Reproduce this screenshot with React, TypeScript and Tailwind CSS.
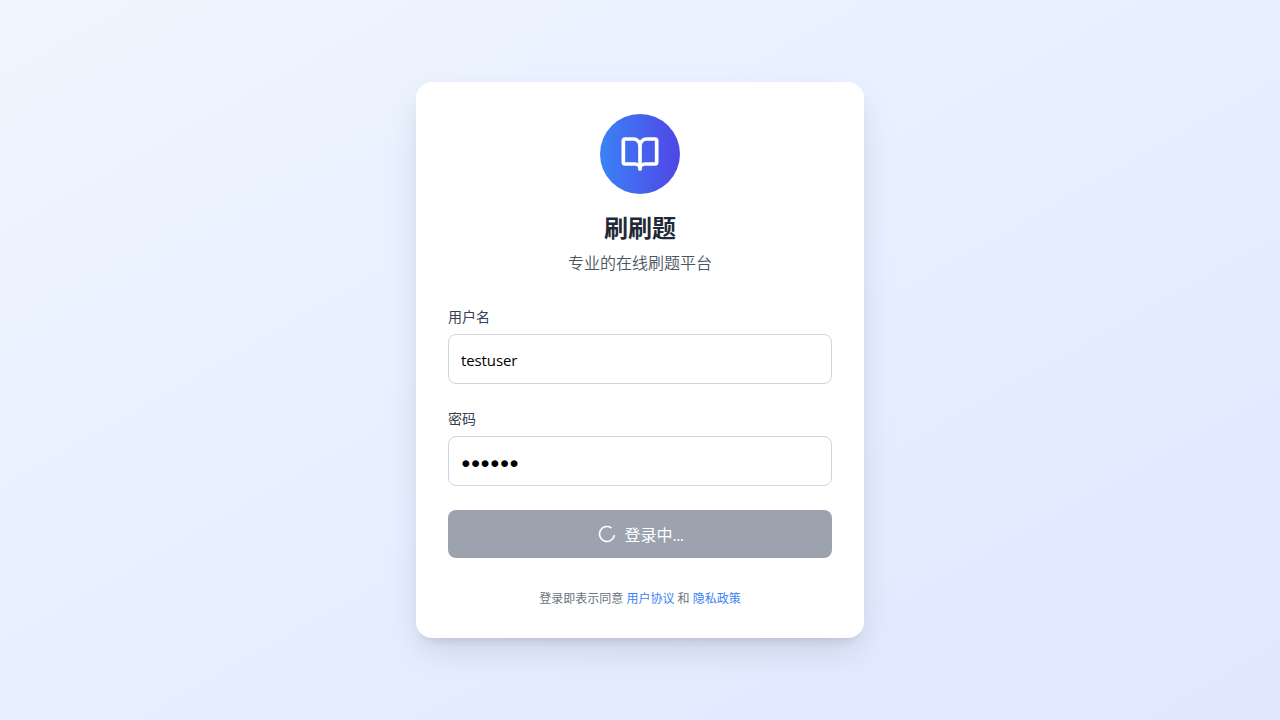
import React from "react";

export default function App() {
  return (
    <div className="flex min-h-screen items-center justify-center bg-[linear-gradient(to_bottom_right,#eff6ff,#e0e7ff)] p-4 font-['Open_Sans','Noto_Sans_CJK_SC',sans-serif]">
      <div className="h-[556px] w-full max-w-md rounded-2xl bg-white p-8 shadow-[0_15px_35px_-5px_rgba(0,0,0,0.13),0_8px_10px_-6px_rgba(0,0,0,0.1)]">
        <div className="mb-[31px] text-center">
          <div className="mx-auto mb-[18px] flex h-20 w-20 items-center justify-center rounded-full bg-[linear-gradient(to_right,#3b82f6,#4f46e5)]">
            <svg
              className="h-10 w-10 text-white"
              viewBox="0 0 24 24"
              fill="none"
              stroke="currentColor"
              strokeWidth="2.2"
              strokeLinecap="round"
              strokeLinejoin="round"
            >
              <path d="M12 7v14" />
              <path d="M3 18a1 1 0 0 1-1-1V4a1 1 0 0 1 1-1h5a4 4 0 0 1 4 4 4 4 0 0 1 4-4h5a1 1 0 0 1 1 1v13a1 1 0 0 1-1 1h-6a3 3 0 0 0-3 3 3 3 0 0 0-3-3z" />
            </svg>
          </div>
          <h1 className="mb-[7px] text-2xl font-bold text-[#1f2937]">刷刷题</h1>
          <p className="text-base font-[350] text-[#4b5563]">专业的在线刷题平台</p>
        </div>
        <form className="space-y-6" onSubmit={(e) => e.preventDefault()}>
          <div>
            <label className="mb-[7px] block pt-px text-sm text-[#374151]">用户名</label>
            <input
              type="text"
              defaultValue="testuser"
              className="block h-[50px] w-full rounded-lg border border-[#d1d5db] px-3 pt-px text-[15px] tracking-[-0.1px] text-black"
            />
          </div>
          <div>
            <label className="mb-[7px] block pt-px text-sm text-[#374151]">密码</label>
            <input
              type="password"
              defaultValue="123456"
              className="block h-[50px] w-full rounded-lg border border-[#d1d5db] px-3 pt-[7px] font-['DejaVu_Sans',sans-serif] text-[16.4px] text-black [-webkit-text-stroke:2px_black]"
            />
          </div>
          <button className="flex h-12 w-full items-center justify-center rounded-lg bg-[#9ca3af] text-base text-white">
            <svg
              className="mr-2 h-5 w-5 rotate-[14deg]"
              viewBox="0 0 24 24"
              fill="none"
              stroke="currentColor"
              strokeWidth="2"
              strokeLinecap="round"
            >
              <path d="M21 12a9 9 0 1 1-6.219-8.56" />
            </svg>
            <span className="pt-[2px]">
              登录中<span className="tracking-[-0.6px]">...</span>
            </span>
          </button>
        </form>
        <p className="mt-[33px] text-center text-xs text-[#6b7280]">
          登录即表示同意 <a className="text-[#3b82f6]">用户协议</a> 和 <a className="text-[#3b82f6]">隐私政策</a>
        </p>
      </div>
    </div>
  );
}
